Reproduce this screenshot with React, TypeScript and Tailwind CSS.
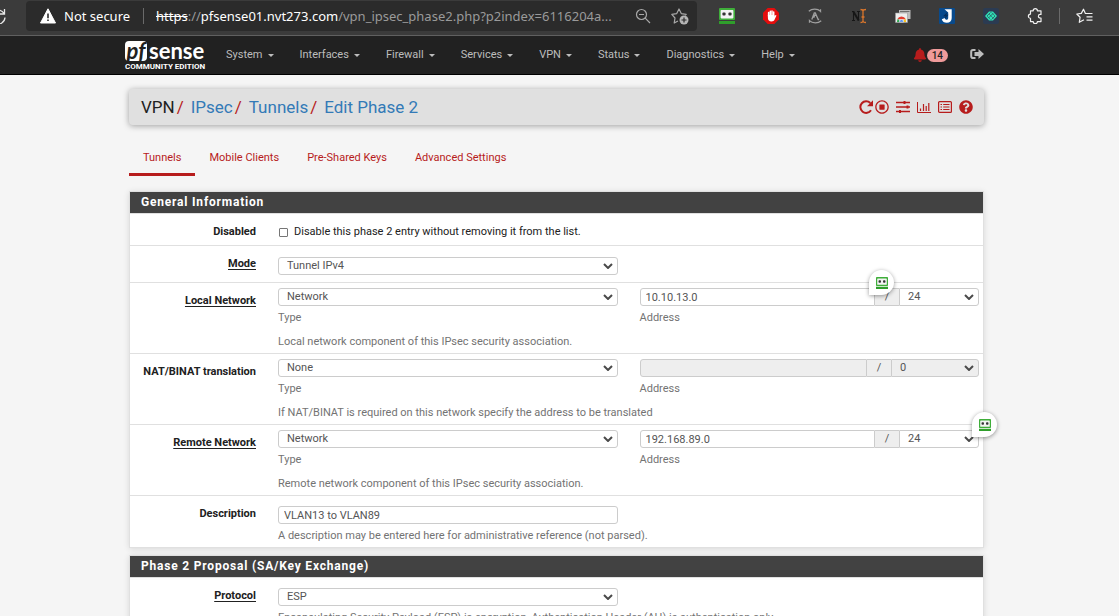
import type { ReactNode } from "react";
import { FaBell, FaQuestionCircle, FaRegStopCircle } from "react-icons/fa";

function RoboIcon({ className }: { className: string }) {
  return (
    <svg viewBox="0 0 16 16" className={className} aria-hidden="true">
      <rect x="0" y="0" width="16" height="12" rx="1" fill="#3fae3a" />
      <rect x="1.6" y="2" width="12.8" height="8.4" rx="0.8" fill="#f3f3f3" />
      <rect x="3.4" y="4.4" width="3.2" height="3.2" rx="1" fill="#333" />
      <rect x="9.4" y="4.4" width="3.2" height="3.2" rx="1" fill="#333" />
      <rect x="0" y="13" width="16" height="3" fill="#2f9e2b" />
    </svg>
  );
}

function BlockerIcon() {
  return (
    <svg viewBox="0 0 16 16" className="size-4" aria-hidden="true">
      <path d="M4.7 0h6.600L16 4.700v6.600L11.300 16H4.700L0 11.300V4.700z" fill="#e40d0d" />
      <path
        d="M5.600 8.200V4.600M7.300 7.500V3.200M9 7.500V3M10.700 8V4"
        stroke="#fff"
        strokeWidth="1.500"
        strokeLinecap="round"
        fill="none"
      />
      <path d="M4.900 7h6.500v1.500l1.100-1.500 1 .6-2 4.200c-.5 1.100-1.400 1.700-3 1.700-2.300 0-3.600-1.300-3.600-3.400z" fill="#fff" />
    </svg>
  );
}

function OrbitIcon() {
  return (
    <svg viewBox="0 0 16 16" className="size-4" fill="none" stroke="#a0a0a0" strokeWidth="1.300" aria-hidden="true">
      <path d="M1.800 3.200C5 .5 10.500.4 13.500 3.400V1.200M14.200 12.800C11 15.500 5.500 15.600 2.500 12.600v2.200" />
      <path d="M4.800 11.500 7.300 5h1l2.900 6.500h1M8 6.500 6.700 9.800" />
    </svg>
  );
}

function TextCursorIcon() {
  return (
    <svg viewBox="0 0 16 16" className="size-4" aria-hidden="true">
      <path d="M2.500 3.500v9M1 12.500h3M7.500 3.500v9M6 3.500h3M1 3.500h2" stroke="#161616" strokeWidth="1.100" fill="none" />
      <path d="m2.300 3.500 5.400 9" stroke="#161616" strokeWidth="2" fill="none" />
      <path d="M9.500 1.500c1.500 0 2.500.5 2.500 1.500 0-1 1-1.500 3-1.500M12 3v10M9.500 14.500c1.500 0 2.500-.5 2.500-1.500 0 1 1 1.500 3 1.500M10.500 9h3" stroke="#d9762c" strokeWidth="1.300" fill="none" />
    </svg>
  );
}

function GalleryIcon() {
  return (
    <svg viewBox="0 0 16 16" className="size-4" aria-hidden="true">
      <path d="M4 2h11.500v9H4z" fill="#bdbdbd" />
      <path d="M5 3h9.500v1H5z" fill="#6d6d6d" />
      <path d="M.5 5h12v9.500H.5z" fill="#eee" stroke="#999" strokeWidth=".6" />
      <path d="M2.300 11.300a4.600 4.600 0 0 1 8.400 0z" fill="#e33b2e" />
      <path d="M10.200 10.500c.6 1 .9 2.200.8 3.500H7.500z" fill="#fbc116" />
      <path d="M2 14c0-1.200.3-2.300.9-3.200L5.500 14z" fill="#2da94f" />
      <path d="M4.300 14a2.200 2.200 0 0 1 4.400 0z" fill="#3b7ded" stroke="#fff" strokeWidth=".5" />
    </svg>
  );
}

function JIcon() {
  return (
    <svg viewBox="0 0 16 16" className="size-4" aria-hidden="true">
      <rect width="16" height="16" rx="1" fill="#084a8c" />
      <path d="M5.500 1.200h7.200V10c0 3-1.800 4.800-4.900 4.800-2.600 0-4.400-1.300-5-3.600l3-1.300c.3 1.200.9 1.800 1.900 1.800 1.100 0 1.500-.8 1.500-2V4.500z" fill="#fff" />
      <path d="M8.500 4 4 8.300h2.500l-.8 2.900 3.800-4.400H7.300z" fill="#062e5b" />
    </svg>
  );
}

function TealIcon() {
  return (
    <svg viewBox="0 0 16 16" className="size-4" aria-hidden="true">
      <rect width="16" height="16" rx="2" fill="#2b3b52" />
      <path d="M6 3.500h4L14 8l-4 4.500H6L2 8z" fill="#2fe0b5" />
      <path d="m4 8 3.500-3.500M5.500 10 10 5.500M8.500 11.500 12 8" stroke="#2b3b52" strokeWidth=".7" />
      <path d="M4 8l3.500 3.500M6 6l4.500 4.500M8.500 4.500 12 8" stroke="#2b3b52" strokeWidth=".5" />
    </svg>
  );
}

function PuzzleIcon() {
  return (
    <svg viewBox="0 0 16 16" className="size-4" fill="none" stroke="#f0f0f0" strokeWidth="1.200" strokeLinejoin="round" aria-hidden="true">
      <path d="M3.500 2.800h2.700a2.100 2.100 0 0 1 4.200 0H14v3.600h-.8a1.800 1.800 0 0 0 0 3.600h.8v3.600h-3.600a2.100 2.100 0 0 1-4.200 0H3.500V10.300a2.100 2.100 0 0 1 0-4.200z" />
    </svg>
  );
}

function FavoritesIcon() {
  return (
    <svg viewBox="0 0 18 16" className="h-4 w-[18px]" fill="none" stroke="#f0f0f0" strokeWidth="1.200" strokeLinejoin="round" aria-hidden="true">
      <path d="M16.500 5.500H9.400L7.500 1.200 5.300 5.400.8 6l3.300 3.200-.8 5.100 4.700-2.500M10.500 8.800h6M10.500 12.200h6" />
    </svg>
  );
}

function AddressBar() {
  return (
    <header className="overflow-hidden border-b border-[#606060] bg-[#3b3b3b] pb-[3px] font-['Noto_Sans',sans-serif]">
      <div className="flex h-8 items-center">
        <button aria-label="Reload" className="-ml-2.5 flex size-4 shrink-0 items-center">
          <svg viewBox="0 0 16 16" className="size-4" fill="none" stroke="#e8e8e8" strokeWidth="1.300">
            <path d="M14.500 1v5h-5M14 5.500A7 7 0 1 0 15 9.500" />
          </svg>
        </button>
        <div className="ml-5 flex h-[30px] min-w-0 flex-1 items-center rounded bg-[#2b2b2b] pr-2 pl-3.5">
          <svg viewBox="0 0 16 16" className="size-4 shrink-0" aria-hidden="true">
            <path d="M8 .8 15.500 15H.5z" fill="#fff" stroke="#fff" strokeLinejoin="round" />
            <path d="M8 5.500v4.800M8 11.500v1.600" stroke="#2b2b2b" strokeWidth="1.600" />
          </svg>
          <span className="ml-2 w-20 shrink-0 border-r border-[#6a6a6a] text-[13px] leading-4 whitespace-nowrap text-white">
            Not secure
          </span>
          <span className="ml-3 min-w-0 flex-1 truncate text-[13px] leading-5 text-[#9a9a9a]">
            <span className="text-white line-through">https</span>://
            <span className="text-white">pfsense01.nvt273.com</span>
            /vpn_ipsec_phase2.php?p2index=6116204a...
          </span>
          <button aria-label="Zoom" className="mr-5 shrink-0">
            <svg viewBox="0 0 16 16" className="size-4" fill="none" stroke="#a8a8a8" strokeWidth="1.200">
              <circle cx="6.500" cy="6.500" r="5" />
              <path d="m10.200 10.200 4.800 4.800M4 6.500h5" />
            </svg>
          </button>
          <button aria-label="Add to favorites" className="shrink-0">
            <svg viewBox="0 0 18 18" className="size-[18px]" fill="none" stroke="#a8a8a8" strokeWidth="1.200" strokeLinejoin="round">
              <path d="m7 14-3.800 2 .8-5L.8 7.400l4.800-.7L8 2l2.400 4.700 4.800.7-1 1" />
              <circle cx="13" cy="13" r="4.500" fill="#b5b5b5" stroke="none" />
              <path d="M13 10.500v5M10.500 13h5" stroke="#2b2b2b" />
            </svg>
          </button>
        </div>
        <div className="flex shrink-0 items-center gap-7 pr-[25px] pl-[22px]">
          <RoboIcon className="size-4" />
          <BlockerIcon />
          <OrbitIcon />
          <TextCursorIcon />
          <GalleryIcon />
          <JIcon />
          <TealIcon />
          <div className="flex items-center gap-4">
            <PuzzleIcon />
            <div className="h-4 w-px bg-[#6a6a6a]" />
            <FavoritesIcon />
          </div>
        </div>
      </div>
    </header>
  );
}

function Logo() {
  return (
    <a href="#home" className="flex w-20 flex-col pt-0.5 text-white">
      <span className="flex h-5 items-center gap-0.5 font-['Lato',sans-serif] text-[22px] leading-5 font-bold">
        <span className="flex h-5 w-[22px] items-center justify-center rounded-sm bg-white text-[#212121] italic">pf</span>
        <span>sense</span>
      </span>
      <span className="mt-0.5 text-[8px] leading-2 font-bold whitespace-nowrap">COMMUNITY EDITION</span>
    </a>
  );
}

const menus = ["System", "Interfaces", "Firewall", "Services", "VPN", "Status", "Diagnostics", "Help"];

function NavBar() {
  return (
    <nav className="border-b border-black bg-[#212121] pr-1.5 text-[#bdbdbd]">
      <div className="mx-auto flex h-[38px] max-w-[863px] items-center">
        <Logo />
        <ul className="ml-2 flex">
          {menus.map((m) => (
            <li key={m}>
              <a href="#menu" className="flex items-center gap-[5px] px-[13px] leading-4">
                {m}
                <svg viewBox="0 0 6 3" className="h-[3px] w-1.5" aria-hidden="true">
                  <path d="M0 0h6L3 3z" fill="currentColor" />
                </svg>
              </a>
            </li>
          ))}
        </ul>
        <a href="#notices" className="ml-auto flex items-center text-[#b71c1c]" aria-label="Notices">
          <FaBell className="size-3.5" />
          <span className="rounded-full bg-[#ef9a9a] px-[5px] text-[10px] leading-[13px] font-medium text-[#212121]">14</span>
        </a>
        <a href="#logout" className="mr-1 ml-[22px]" aria-label="Logout">
          <svg viewBox="0 0 14 14" className="size-3.5" aria-hidden="true">
            <path d="M5.500 2H3A1.800 1.800 0 0 0 1.200 3.800v4.400A1.800 1.800 0 0 0 3 10h2.500" fill="none" stroke="currentColor" strokeWidth="2" />
            <path d="M4.500 4.100h4V1L14 6l-5.500 5V7.900h-4z" fill="currentColor" />
          </svg>
        </a>
      </div>
    </nav>
  );
}

function TitleBar() {
  return (
    <div className="flex h-9 items-center justify-between rounded-sm bg-[#e0e0e0] pr-[11px] pl-3 shadow-[0_1px_6px_rgba(0,0,0,0.35)]">
      <ol className="flex text-[17px] leading-6 text-[#337ab7]">
        <li className="text-[#212121]">VPN</li>
        {["IPsec", "Tunnels", "Edit Phase 2"].map((c) => (
          <li key={c} className="flex">
            <span className="mr-[7px] ml-0.5 text-[#b71c1c]">/</span>
            <a href="#crumb">{c}</a>
          </li>
        ))}
      </ol>
      <div className="flex items-center gap-[7px] text-[#b71c1c]">
        <div className="flex gap-0.5">
          <button aria-label="Restart service">
            <svg viewBox="0 0 14 14" className="size-3.5" fill="none">
              <path d="M12 10.300A5.800 5.800 0 1 1 11.300 3" stroke="currentColor" strokeWidth="2" />
              <path d="M14 .2v6H8z" fill="currentColor" />
            </svg>
          </button>
          <button aria-label="Stop service">
            <FaRegStopCircle className="size-3.5" />
          </button>
        </div>
        <button aria-label="Settings">
          <svg viewBox="0 0 14 14" className="size-3.5" stroke="currentColor" strokeWidth="1.400">
            <path d="M0 2.500h14M0 7h14M0 11.500h14" />
            <path d="M8.500 1v3M11.500 5.500v3M4 10v3" strokeWidth="2" />
          </svg>
        </button>
        <button aria-label="Status">
          <svg viewBox="0 0 14 14" className="size-3.5" stroke="currentColor" fill="none">
            <path d="M.5 2v10.500H14" />
            <path d="M3.500 11V8.500M6.500 11V4M9.200 11V6M11.800 11V3" strokeWidth="1.200" />
          </svg>
        </button>
        <button aria-label="Logs">
          <svg viewBox="0 0 14 14" className="size-3.5" stroke="currentColor" fill="none">
            <rect x=".6" y="1.600" width="12.800" height="10.800" rx="1" strokeWidth="1.200" />
            <path d="M2.500 4.500H4M5.200 4.500h6.300M2.500 7H4M5.200 7h6.300M2.500 9.500H4M5.200 9.500h6.300" strokeWidth="1.200" />
          </svg>
        </button>
        <button aria-label="Help">
          <FaQuestionCircle className="size-3.5" />
        </button>
      </div>
    </div>
  );
}

function Tabs() {
  return (
    <ul className="mt-3.5 flex text-[#b71c1c]">
      {["Tunnels", "Mobile Clients", "Pre-Shared Keys", "Advanced Settings"].map((t, i) => (
        <li key={t}>
          <a
            href="#tab"
            className={
              i === 0
                ? "block border-b-[3px] border-[#b71c1c] px-3.5 pt-[11px] pb-[7px] leading-4"
                : "block border-b-[3px] border-transparent px-3.5 pt-[11px] pb-[7px] leading-4"
            }
          >
            {t}
          </a>
        </li>
      ))}
    </ul>
  );
}

function Panel({ title, children }: { title: string; children: ReactNode }) {
  return (
    <section className="border border-[#e0e0e0] bg-white shadow-[0_1px_6px_rgba(0,0,0,0.12)]">
      <h2 className="border-b border-[#e0e0e0] bg-[#424242] bg-clip-padding px-[11px] text-[12px] leading-[21px] font-bold tracking-[0.8px] text-white">
        {title}
      </h2>
      <div className="divide-y divide-[#e0e0e0]">{children}</div>
    </section>
  );
}

function Row({ id, label, required, children }: { id: string; label: string; required?: boolean; children: ReactNode }) {
  return (
    <div className="flex gap-[22px] pr-1">
      <label htmlFor={id} className="w-[126px] shrink-0 pt-2.5 text-right leading-4 font-bold text-[#212121]">
        <span className={required ? "underline decoration-1 underline-offset-2 [text-decoration-skip-ink:none]" : ""}>{label}</span>
      </label>
      <div className="min-w-0 flex-1">{children}</div>
    </div>
  );
}

function Select({ id, label, value, disabled, joined }: { id: string; label: string; value: string; disabled?: boolean; joined?: boolean }) {
  return (
    <div className="relative min-w-0 flex-1">
      <select
        id={id}
        aria-label={label}
        disabled={disabled}
        className={`block h-[18px] w-full appearance-none border border-[#ccc] px-2 leading-4 text-[#555] opacity-100 ${
          joined ? "rounded-r-[3px]" : "rounded-[3px]"
        } ${disabled ? "bg-[#eee]" : "bg-white"}`}
      >
        <option>{value}</option>
      </select>
      <svg viewBox="0 0 10 6" className="pointer-events-none absolute top-1.5 right-[5px] h-1.5 w-2.5" aria-hidden="true">
        <path d="m1 1 4 4 4-4" fill="none" stroke="#4a4a4a" strokeWidth="2" />
      </svg>
    </div>
  );
}

function Help({ children }: { children: ReactNode }) {
  return <p className="mt-1 leading-4 text-[#737373]">{children}</p>;
}

function NetworkRow(props: {
  id: string;
  label: string;
  required?: boolean;
  type: string;
  address: string;
  mask: string;
  help: string;
  disabled?: boolean;
  badge?: string;
}) {
  const { id, label, required, type, address, mask, help, disabled, badge } = props;
  return (
    <Row id={id} label={label} required={required}>
      <div className="flex gap-[22px] pt-[5px]">
        <div className="min-w-0 flex-1">
          <Select id={id} label={`${label} type`} value={type} />
          <Help>Type</Help>
        </div>
        <div className="min-w-0 flex-1">
          <div className="relative flex">
            <input
              aria-label={`${label} address`}
              defaultValue={address}
              disabled={disabled}
              className={`h-[18px] min-w-0 flex-1 rounded-l-[3px] border border-[#ccc] px-[5px] leading-4 text-[#555] ${
                disabled ? "bg-[#eee]" : "bg-white"
              }`}
            />
            <span className="h-[18px] w-6 border-y border-[#ccc] bg-[#eee] text-center leading-4 text-[#555]">/</span>
            <div className={disabled ? "flex w-[88px]" : "flex w-20"}>
              <Select id={`${id}-mask`} label={`${label} mask`} value={mask} disabled={disabled} joined />
            </div>
            {badge && (
              <button
                type="button"
                aria-label="Fill form"
                className={`absolute -top-[18px] flex size-[25px] items-center justify-center rounded-full rounded-bl-none bg-white shadow-[0_1px_4px_rgba(0,0,0,0.4)] ${badge}`}
              >
                <RoboIcon className="size-3" />
              </button>
            )}
          </div>
          <Help>Address</Help>
        </div>
      </div>
      <p className="mt-2 pb-[3px] leading-4 text-[#737373]">{help}</p>
    </Row>
  );
}

export default function App() {
  return (
    <div className="flex h-screen flex-col overflow-hidden bg-[#f5f5f5] font-['Roboto',sans-serif] text-[11px] text-[#212121]">
      <div className="shrink-0">
        <AddressBar />
        <NavBar />
      </div>
      <main className="min-h-0 flex-1 overflow-y-auto pt-3.5 pr-1.5 [scrollbar-width:none]">
        <div className="mx-auto max-w-[855px]">
          <TitleBar />
          <Tabs />
          <form className="mt-[15px] flex flex-col gap-[7px]">
            <Panel title="General Information">
              <Row id="disabled" label="Disabled">
                <div className="flex items-center pt-2.5 pb-[5px] leading-4">
                  <input id="disabled" type="checkbox" className="mr-1.5 ml-px size-[9px] appearance-none rounded-[1px] border border-[#767676] bg-white" />
                  <label htmlFor="disabled">Disable this phase 2 entry without removing it from the list.</label>
                </div>
              </Row>
              <Row id="mode" label="Mode" required>
                <div className="flex gap-[22px] pt-[11px] pb-[7px]">
                  <Select id="mode" label="Mode" value="Tunnel IPv4" />
                  <div className="flex-1" />
                </div>
              </Row>
              <NetworkRow
                id="local"
                label="Local Network"
                required
                type="Network"
                address="10.10.13.0"
                mask="24"
                help="Local network component of this IPsec security association."
                badge="right-[85px]"
              />
              <NetworkRow
                id="nat"
                label="NAT/BINAT translation"
                type="None"
                address=""
                mask="0"
                help="If NAT/BINAT is required on this network specify the address to be translated"
                disabled
              />
              <NetworkRow
                id="remote"
                label="Remote Network"
                required
                type="Network"
                address="192.168.89.0"
                mask="24"
                help="Remote network component of this IPsec security association."
                badge="-right-[18px]"
              />
              <Row id="descr" label="Description">
                <div className="pt-2.5 pb-[3px]">
                  <div className="flex gap-[22px]">
                    <div className="min-w-0 flex-1">
                      <input
                        id="descr"
                        defaultValue="VLAN13 to VLAN89"
                        className="block h-[18px] w-full rounded-[3px] border border-[#ccc] bg-white px-[5px] leading-4 text-[#555]"
                      />
                    </div>
                    <div className="flex-1" />
                  </div>
                  <Help>A description may be entered here for administrative reference (not parsed).</Help>
                </div>
              </Row>
            </Panel>
            <Panel title="Phase 2 Proposal (SA/Key Exchange)">
              <Row id="protocol" label="Protocol" required>
                <div className="pt-2.5 pb-[3px]">
                  <div className="flex gap-[22px]">
                    <Select id="protocol" label="Protocol" value="ESP" />
                    <div className="flex-1" />
                  </div>
                  <Help>Encapsulating Security Payload (ESP) is encryption, Authentication Header (AH) is authentication only.</Help>
                </div>
              </Row>
            </Panel>
          </form>
        </div>
      </main>
    </div>
  );
}
